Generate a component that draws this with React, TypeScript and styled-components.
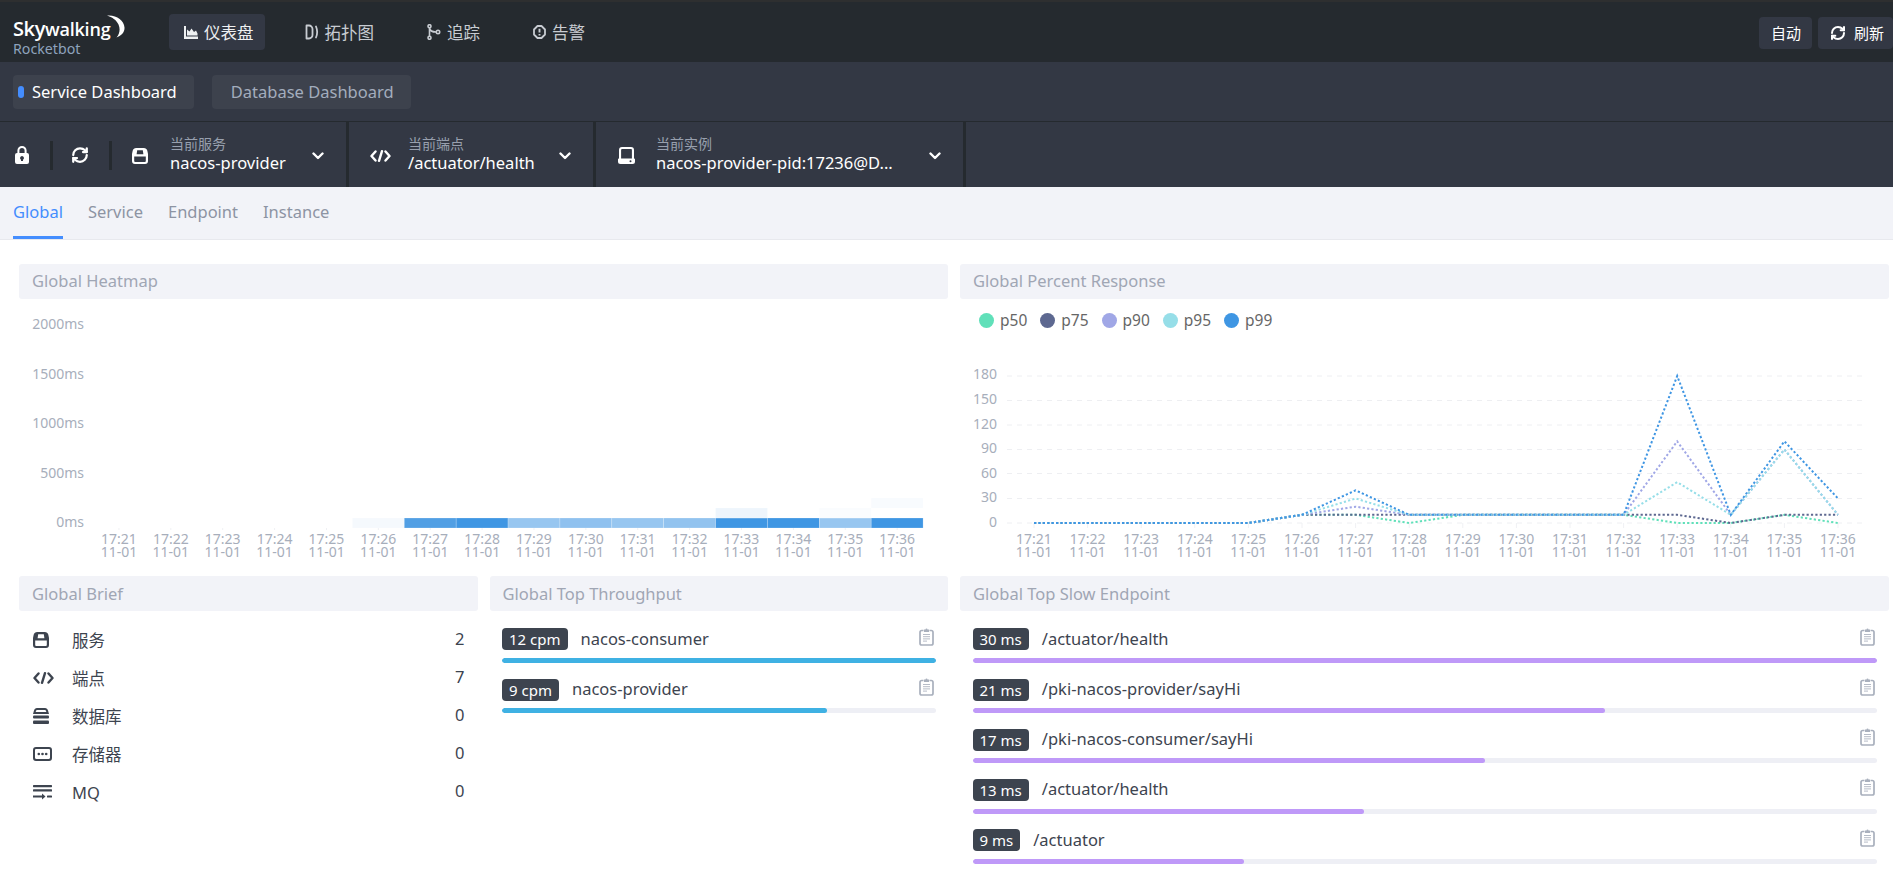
import React from "react";
import styled, { createGlobalStyle } from "styled-components";
import { RefreshCw } from "lucide-react";

const Global = createGlobalStyle`
  html, body { margin: 0; padding: 0; height: 875px; overflow: hidden; background: #fff; }
  body { font-family: "Noto Sans", "Noto Sans CJK SC", sans-serif; }
  * { box-sizing: border-box; }
`;

const Page = styled.div`
  width: 1893px;
  height: 875px;
  overflow: hidden;
  display: flex;
  flex-direction: column;
`;

const TopBar = styled.header`
  height: 62px;
  flex: none;
  background: #252a2f;
  border-top: 2px solid #2e2f30;
  display: flex;
  align-items: center;
  padding-left: 13px;
`;
const Logo = styled.div`
  position: relative;
  width: 156px;
  height: 40px;
  padding-top: 5px;
  color: #fff;
  flex: none;
`;
const LogoName = styled.div`
  font-family: "Open Sans", sans-serif;
  font-size: 18px;
  font-weight: 600;
  line-height: 24px;
  letter-spacing: -0.2px;
  white-space: nowrap;
`;
const LogoBig = styled.span`
  font-size: 20px;
  letter-spacing: -0.4px;
`;
const LogoSub = styled.div`
  font-size: 14.2px;
  line-height: 16px;
  color: #8ea3bd;
`;
const Crescent = styled.svg`
  position: absolute;
  left: 94px;
  top: 3px;
`;
const Nav = styled.nav`
  display: flex;
  align-items: center;
  gap: 25px;
`;
const NavItem = styled.div<{ $active?: boolean }>`
  height: 36px;
  padding: 0 ${(p) => (p.$active ? 11 : 13)}px 0 15px;
  border-radius: 4px;
  display: flex;
  align-items: center;
  gap: 6px;
  font-size: 16.5px;
  color: ${(p) => (p.$active ? "#eef0f2" : "#c8ccd2")};
  background: ${(p) => (p.$active ? "#333844" : "transparent")};
  svg { flex: none; }
`;
const TopActions = styled.div`
  margin-left: auto;
  display: flex;
  gap: 6px;
  margin-top: 1px;
`;
const TopButton = styled.div<{ $pr: number }>`
  height: 32px;
  padding: 0 ${(p) => p.$pr}px 0 12px;
  border-radius: 4px;
  background: #333844;
  color: #fff;
  font-size: 15px;
  display: flex;
  align-items: center;
  gap: 8px;
`;

const DashBar = styled.div`
  height: 59px;
  flex: none;
  background: #333844;
  display: flex;
  align-items: center;
  padding-left: 13px;
  gap: 18px;
`;
const DashTab = styled.div<{ $active?: boolean }>`
  height: 34px;
  border-radius: 4px;
  background: #3d424d;
  display: flex;
  align-items: center;
  padding: ${(p) => (p.$active ? "0 17px 0 5px" : "0 17px 0 19px")};
  gap: 8px;
  font-size: 16.5px;
  color: ${(p) => (p.$active ? "#fff" : "#a3adbd")};
`;
const DashDot = styled.span`
  width: 6px;
  height: 12px;
  border-radius: 3px;
  background: #448dfe;
`;

const ToolBar = styled.div`
  height: 66px;
  flex: none;
  background: #333844;
  border-top: 1px solid #252a2f;
  display: flex;
  align-items: stretch;
`;
const ToolButton = styled.div<{ $w: number; $pr?: number }>`
  width: ${(p) => p.$w}px;
  padding-right: ${(p) => p.$pr ?? 0}px;
  display: flex;
  align-items: center;
  justify-content: center;
  color: #fff;
`;
const ToolSep = styled.div`
  width: 3px;
  height: 29px;
  align-self: center;
  background: #252a2f;
  margin-top: 2px;
  flex: none;
`;
const Selector = styled.div<{ $w: number; $inset: number }>`
  width: ${(p) => p.$w}px;
  flex: none;
  display: flex;
  align-items: center;
  padding: 0 22px 0 ${(p) => p.$inset}px;
  border-right: 3px solid #252a2f;
  color: #fff;
`;
const SelectorIcon = styled.div`
  width: 39px;
  flex: none;
  display: flex;
  align-items: center;
  padding-left: 1px;
  margin-top: 2px;
`;
const SelectorText = styled.div`
  display: flex;
  flex-direction: column;
  margin-top: -2px;
`;
const SelectorLabel = styled.span`
  font-size: 14px;
  line-height: 19px;
  color: #98a0ae;
`;
const SelectorValue = styled.span`
  font-size: 16.5px;
  line-height: 20px;
  color: #fff;
  white-space: nowrap;
`;
const Chevron = styled.svg`
  margin-left: auto;
  margin-top: 2px;
  flex: none;
`;

const Tabs = styled.div`
  height: 53px;
  flex: none;
  background: #f2f3f8;
  border-bottom: 1px solid #e8e9ee;
  display: flex;
  padding-left: 13px;
  gap: 25px;
`;
const Tab = styled.div<{ $active?: boolean }>`
  height: 52px;
  line-height: 50px;
  font-size: 16.5px;
  color: ${(p) => (p.$active ? "#448dfe" : "#8d94a3")};
  border-bottom: 3px solid ${(p) => (p.$active ? "#448dfe" : "transparent")};
`;

const Grid = styled.main`
  padding: 24px 4px 0 19px;
  display: grid;
  grid-template-columns: repeat(4, 1fr);
  grid-template-rows: 312px auto;
  column-gap: 12px;
`;
const Panel = styled.section<{ $span?: number }>`
  grid-column: span ${(p) => p.$span ?? 1};
  min-width: 0;
`;
const PanelTitle = styled.div<{ $lh?: number }>`
  height: 35px;
  background: #f2f3f8;
  border-radius: 3px;
  padding-left: 13px;
  font-size: 16.5px;
  line-height: ${(p) => p.$lh ?? 35}px;
  color: #a0a6b4;
`;

const ChartSvg = styled.svg`
  display: block;
`;
const AxisText = styled.text`
  font-size: 14px;
  fill: #a7aebb;
`;
const Legend = styled.div`
  height: 42px;
  display: flex;
  align-items: center;
  padding-left: 19px;
  gap: 13px;
`;
const LegendItem = styled.div`
  display: flex;
  align-items: center;
  gap: 6px;
  font-size: 15.5px;
  color: #666;
`;
const LegendDot = styled.span<{ $c: string }>`
  width: 15px;
  height: 15px;
  border-radius: 50%;
  background: ${(p) => p.$c};
`;

const BriefList = styled.div`
  padding: 10px 13px 0;
`;
const BriefRow = styled.div`
  height: 38px;
  display: flex;
  align-items: center;
  color: #3d444f;
  font-size: 16.5px;
`;
const BriefIcon = styled.div`
  width: 40px;
  flex: none;
  display: flex;
  align-items: center;
  padding-left: 1px;
`;
const BriefValue = styled.span`
  margin-left: auto;
  padding-bottom: 4px;
`;

const RankList = styled.div`
  padding: 17.4px 12.5px 0;
  display: flex;
  flex-direction: column;
  gap: 15.6px;
`;
const RankItem = styled.div``;
const RankHead = styled.div`
  height: 22px;
  display: flex;
  align-items: center;
  gap: 13px;
`;
const Badge = styled.span`
  height: 22px;
  line-height: 22px;
  padding: 0 7px;
  border-radius: 4px;
  background: #3d444f;
  color: #fff;
  font-size: 15px;
  white-space: nowrap;
`;
const RankName = styled.span`
  font-size: 16.5px;
  color: #3d444f;
  line-height: 22px;
  margin-top: -1px;
`;
const Clip = styled.svg`
  margin-left: auto;
  margin-right: 2px;
  margin-top: -5px;
  color: #a9b0bd;
`;
const Track = styled.div`
  height: 5px;
  margin-top: 7.6px;
  border-radius: 3px;
  background: #eeeff5;
  overflow: hidden;
`;
const Fill = styled.div<{ $c: string }>`
  height: 100%;
  border-radius: 3px;
  background: ${(p) => p.$c};
`;

/* ---------- icons ---------- */
const ServiceIcon = ({ s = 16 }: { s?: number }) => (
  <svg width={s} height={s} viewBox="0 0 16 16" fill="currentColor">
    <path
      fillRule="evenodd"
      d="M4.500 0h7A4 4 0 0 1 15.500 3.500L16 6v7a3 3 0 0 1-3 3H3a3 3 0 0 1-3-3V6l.5-2.500A4 4 0 0 1 4.500 0zM2.200 8.400V13c0 .6.3.9.9.9h9.800c.6 0 .9-.3.9-.9V8.400zM5.200 2.200 4.600 6.200h6.800l-.6-4z"
    />
  </svg>
);
const CodeIcon = ({ w = 21, h = 12 }: { w?: number; h?: number }) => (
  <svg width={w} height={h} viewBox="0 0 21 12" fill="none" stroke="currentColor" strokeWidth="2.400" strokeLinecap="round" strokeLinejoin="round">
    <path d="M5.500 1.500 1.500 6l4 4.500M15.500 1.500l4 4.500-4 4.500M12 1.200 9 10.800" />
  </svg>
);
const InstanceIcon = () => (
  <svg width="17" height="17" viewBox="0 0 17 17" fill="currentColor">
    <path
      fillRule="evenodd"
      d="M4 0h9a3 3 0 0 1 3 3v8.500h.2c.5 0 .8.4.8.8v2.200A2.500 2.500 0 0 1 14.500 17h-12A2.500 2.500 0 0 1 0 14.500v-2.200c0-.4.3-.8.8-.8H1V3a3 3 0 0 1 3-3zM3.100 3v8.500h10.800V3c0-.6-.4-1-1-1H4c-.5 0-.9.4-.9 1zM12.500 13.200a1 1 0 1 0 0 2 1 1 0 0 0 0-2z"
    />
  </svg>
);
const LockIcon = () => (
  <svg width="14" height="18" viewBox="0 0 14 18" fill="currentColor">
    <path
      fillRule="evenodd"
      d="M7 0a4.600 4.600 0 0 1 4.600 4.600V7H12a2 2 0 0 1 2 2v7a2 2 0 0 1-2 2H2a2 2 0 0 1-2-2V9a2 2 0 0 1 2-2h.4V4.600A4.600 4.600 0 0 1 7 0zm0 2a2.600 2.600 0 0 0-2.600 2.600V7h5.200V4.600A2.600 2.600 0 0 0 7 2zm0 8a2 2 0 0 0-1 3.700V15h2v-1.300A2 2 0 0 0 7 10z"
    />
  </svg>
);
const ChevronIcon = () => (
  <Chevron width="12" height="8" viewBox="0 0 12 8" fill="none" stroke="currentColor" strokeWidth="2.400" strokeLinecap="round" strokeLinejoin="round">
    <path d="M1.500 1.500 6 6l4.500-4.500" />
  </Chevron>
);
const ChartIcon = () => (
  <svg width="14" height="14" viewBox="0 0 14 14" fill="currentColor">
    <path d="M0 1h2v10.500h12V14H0z" />
    <path d="M3 10.500V4.500l2.500 2 2-3 2.500 3.500 2-1.500 1.500 3v2z" />
  </svg>
);
const TopoIcon = () => (
  <svg width="14" height="16" viewBox="0 0 14 16" fill="none" stroke="currentColor" strokeWidth="1.800">
    <path d="M1.500 1.500h2.500A3.500 3.500 0 0 1 7.500 5v6a3.500 3.500 0 0 1-3.500 3.500H1.500z" strokeLinejoin="round" />
    <path d="M11 2.500c1.500 3.500 1.500 7.500 0 11" strokeLinecap="round" />
  </svg>
);
const TraceIcon = () => (
  <svg width="14" height="16" viewBox="0 0 14 16" fill="none" stroke="currentColor" strokeWidth="1.600">
    <path d="M2.500 3v10M2.500 4c.5 3 3 4 6.500 4" />
    <circle cx="2.500" cy="2.200" r="1.500" />
    <circle cx="2.500" cy="13.800" r="1.500" />
    <circle cx="11" cy="8" r="1.700" />
  </svg>
);
const AlertIcon = () => (
  <svg width="13" height="14" viewBox="0 0 13 14" fill="none" stroke="currentColor" strokeWidth="1.800">
    <path d="M4.500 1h4L12 4.500v5L8.500 13h-4L1 9.500v-5z" strokeLinejoin="round" />
    <path d="M6.500 3.800v3.800M6.500 9v1.400" strokeWidth="1.900" />
  </svg>
);
const DbIcon = () => (
  <svg width="16" height="16" viewBox="0 0 16 16" fill="currentColor">
    <path fillRule="evenodd" d="M4 0h8c1.500 0 2.600 1.200 3 2.600L16 6H0l1-3.400C1.400 1.200 2.500 0 4 0zm.2 2c-.6 0-1 .3-1.200.8L2.700 4h10.600L13 2.800c-.2-.5-.6-.8-1.200-.8z" />
    <rect y="7.500" width="16" height="3" rx="1" />
    <rect y="12.500" width="16" height="3.500" rx="1" />
  </svg>
);
const StorageIcon = () => (
  <svg width="19" height="14" viewBox="0 0 19 14" fill="currentColor">
    <path fillRule="evenodd" d="M3 0h13a3 3 0 0 1 3 3v8a3 3 0 0 1-3 3H3a3 3 0 0 1-3-3V3a3 3 0 0 1 3-3zm.2 2C2.500 2 2 2.500 2 3.200v7.600c0 .7.500 1.200 1.200 1.200h12.600c.7 0 1.200-.5 1.200-1.200V3.200c0-.7-.5-1.200-1.200-1.200z" />
    <circle cx="5.800" cy="7" r="1.300" />
    <circle cx="9.500" cy="7" r="1.300" />
    <circle cx="13.200" cy="7" r="1.300" />
  </svg>
);
const MqIcon = () => (
  <svg width="19" height="15" viewBox="0 0 19 15" fill="currentColor">
    <rect width="19" height="2.200" rx=".6" />
    <rect y="4.300" width="19" height="2.200" rx=".6" />
    <rect y="10.500" width="10" height="2" />
    <path d="M9 8.400l3.500 3.100L9 14.600z" />
    <rect x="14" y="10.400" width="5" height="2.200" rx=".6" />
  </svg>
);
const ClipIcon = () => (
  <Clip width="15" height="18" viewBox="0 0 15 18" fill="none" stroke="currentColor">
    <path strokeWidth="1.700" d="M4.500 2.500H2.800C1.800 2.500 1 3.300 1 4.300v10.900c0 1 .8 1.800 1.800 1.800h9.400c1 0 1.800-.8 1.800-1.800V4.300c0-1-.8-1.800-1.800-1.800h-1.700" />
    <path fill="currentColor" strokeWidth="0" d="M5 1.500h1.500a1 1 0 0 1 2 0H10v2.500H5z" />
    <path strokeWidth="1" opacity=".85" d="M4 6.500h7M4 8.700h7M4 10.900h7M4 13.100h4" />
  </Clip>
);
const CrescentIcon = () => (
  <Crescent width="18" height="23" viewBox="0 0 18 23" fill="#fff">
    <path d="M0 .5C9-.5 17 5 17.500 12.500 17.800 17.500 14 21 9.500 22.500 12.700 18.500 13.500 14 11.500 9.500 9.500 5 5 2 0 .5z" />
  </Crescent>
);

/* ---------- chart data ---------- */
const times = ["17:21","17:22","17:23","17:24","17:25","17:26","17:27","17:28","17:29","17:30","17:31","17:32","17:33","17:34","17:35","17:36"];

const heatCells: [number, number, string][] = [
  [5, 0, "#f5f9fd"], [6, 0, "#519fe4"], [7, 0, "#3f96e3"], [8, 0, "#97c6f0"], [9, 0, "#8fc1ef"],
  [10, 0, "#97c6f0"], [11, 0, "#92c3ef"], [12, 0, "#3f96e3"], [12, 1, "#eef5fc"], [13, 0, "#3f96e3"],
  [14, 0, "#97c6f0"], [14, 1, "#fafcfe"], [15, 0, "#3f96e3"], [15, 2, "#f8fbfe"],
];
const heatY: [string, number][] = [["2000ms", 25], ["1500ms", 75], ["1000ms", 124], ["500ms", 174], ["0ms", 223]];

const HeatChart = () => {
  const left = 74;
  const cw = 51.88;
  return (
    <ChartSvg width="929" height="277" viewBox="0 0 929 277">
      {heatY.map(([t, y]) => (
        <AxisText key={t} x={65} y={y + 5} textAnchor="end">{t}</AxisText>
      ))}
      {heatCells.map(([c, r, col]) => (
        <rect key={`${c}-${r}`} x={left + c * cw} y={219 - r * 10} width={cw} height={10} fill={col} stroke="#fff" strokeOpacity=".35" strokeWidth=".6" />
      ))}
      {times.map((t, i) => (
        <g key={t}>
          <line x1={left + cw * (i + 0.5)} x2={left + cw * (i + 0.5)} y1={229} y2={231} stroke="#f0f1f4" />
          <AxisText x={left + cw * (i + 0.5)} y={245} textAnchor="middle">{t}</AxisText>
          <AxisText x={left + cw * (i + 0.5)} y={258} textAnchor="middle">11-01</AxisText>
        </g>
      ))}
    </ChartSvg>
  );
};

const series: { c: string; d: number[] }[] = [
  { c: "#60e0b9", d: [0,0,0,0,0,10,10,0,10,10,10,10,0,0,10,0] },
  { c: "#5d6890", d: [0,0,0,0,0,10,10,10,10,10,10,10,10,0,10,10] },
  { c: "#a0a7e6", d: [0,0,0,0,0,10,20,10,10,10,10,10,100,10,90,10] },
  { c: "#96dee8", d: [0,0,0,0,0,10,30,10,10,10,10,10,50,10,90,10] },
  { c: "#3f96e3", d: [0,0,0,0,0,10,40,10,10,10,10,10,180,10,100,30] },
];
const legend = [
  ["p50", "#60e0b9"], ["p75", "#5d6890"], ["p90", "#a0a7e6"], ["p95", "#96dee8"], ["p99", "#3f96e3"],
];
const lineYLabels: [string, number, number][] = [
  ["180", 374, 376], ["150", 399, 400.5], ["120", 424, 425], ["90", 448, 449.5], ["60", 473, 473.5], ["30", 497, 498.5], ["0", 522, 523],
];

const LineChart = () => {
  const ox = 960;
  const oy = 341;
  const px = (i: number) => 1034 - ox + i * 53.6;
  const py = (v: number) => 523 - oy - (v * 147) / 180;
  return (
    <ChartSvg width="929" height="235" viewBox="0 0 929 235">
      {lineYLabels.map(([t, ly, gy]) => (
        <g key={t}>
          <AxisText x={37} y={ly - oy + 5} textAnchor="end">{t}</AxisText>
          <line x1={47} x2={903} y1={gy - oy} y2={gy - oy} stroke="#eeeff2" strokeDasharray="5 5" />
        </g>
      ))}
      {times.map((t, i) => (
        <g key={t}>
          <line x1={px(i)} x2={px(i)} y1={py(0)} y2={py(0) + 5} stroke="#f0f1f4" />
          <AxisText x={px(i)} y={203} textAnchor="middle">{t}</AxisText>
          <AxisText x={px(i)} y={216} textAnchor="middle">11-01</AxisText>
        </g>
      ))}
      {series.map((s) => (
        <polyline
          key={s.c}
          points={s.d.map((v, i) => `${px(i)},${py(v)}`).join(" ")}
          fill="none"
          stroke={s.c}
          strokeWidth="2"
          strokeDasharray="2.200 2.200"
        />
      ))}
    </ChartSvg>
  );
};

const briefRows: [React.ReactNode, string, number][] = [
  [<ServiceIcon key="s" />, "服务", 2],
  [<CodeIcon key="c" />, "端点", 7],
  [<DbIcon key="d" />, "数据库", 0],
  [<StorageIcon key="st" />, "存储器", 0],
  [<MqIcon key="m" />, "MQ", 0],
];
const throughput = [
  { v: "12 cpm", n: "nacos-consumer", p: 100 },
  { v: "9 cpm", n: "nacos-provider", p: 75 },
];
const slow = [
  { v: "30 ms", n: "/actuator/health", p: 100 },
  { v: "21 ms", n: "/pki-nacos-provider/sayHi", p: 70 },
  { v: "17 ms", n: "/pki-nacos-consumer/sayHi", p: 56.7 },
  { v: "13 ms", n: "/actuator/health", p: 43.3 },
  { v: "9 ms", n: "/actuator", p: 30 },
];

const Rank = ({ rows, color }: { rows: { v: string; n: string; p: number }[]; color: string }) => (
  <RankList>
    {rows.map((r) => (
      <RankItem key={r.v + r.n}>
        <RankHead>
          <Badge>{r.v}</Badge>
          <RankName>{r.n}</RankName>
          <ClipIcon />
        </RankHead>
        <Track>
          <Fill $c={color} style={{ width: `${r.p}%` }} />
        </Track>
      </RankItem>
    ))}
  </RankList>
);

export default function App() {
  return (
    <Page>
      <Global />
      <TopBar>
        <Logo>
          <LogoName><LogoBig>Sky</LogoBig>walking</LogoName>
          <LogoSub>Rocketbot</LogoSub>
          <CrescentIcon />
        </Logo>
        <Nav>
          <NavItem $active><ChartIcon />仪表盘</NavItem>
          <NavItem><TopoIcon />拓扑图</NavItem>
          <NavItem><TraceIcon />追踪</NavItem>
          <NavItem><AlertIcon />告警</NavItem>
        </Nav>
        <TopActions>
          <TopButton $pr={11}>自动</TopButton>
          <TopButton $pr={9}><RefreshCw size={16} strokeWidth={3} />刷新</TopButton>
        </TopActions>
      </TopBar>

      <DashBar>
        <DashTab $active><DashDot />Service Dashboard</DashTab>
        <DashTab>Database Dashboard</DashTab>
      </DashBar>

      <ToolBar>
        <ToolButton $w={50} $pr={7}><LockIcon /></ToolButton>
        <ToolSep />
        <ToolButton $w={56} $pr={3}><RefreshCw size={18} strokeWidth={3} /></ToolButton>
        <ToolSep />
        <Selector $w={237} $inset={19}>
          <SelectorIcon><ServiceIcon /></SelectorIcon>
          <SelectorText>
            <SelectorLabel>当前服务</SelectorLabel>
            <SelectorValue>nacos-provider</SelectorValue>
          </SelectorText>
          <ChevronIcon />
        </Selector>
        <Selector $w={247} $inset={20}>
          <SelectorIcon><CodeIcon /></SelectorIcon>
          <SelectorText>
            <SelectorLabel>当前端点</SelectorLabel>
            <SelectorValue>/actuator/health</SelectorValue>
          </SelectorText>
          <ChevronIcon />
        </Selector>
        <Selector $w={370} $inset={21}>
          <SelectorIcon><InstanceIcon /></SelectorIcon>
          <SelectorText>
            <SelectorLabel>当前实例</SelectorLabel>
            <SelectorValue>nacos-provider-pid:17236@D...</SelectorValue>
          </SelectorText>
          <ChevronIcon />
        </Selector>
      </ToolBar>

      <Tabs>
        <Tab $active>Global</Tab>
        <Tab>Service</Tab>
        <Tab>Endpoint</Tab>
        <Tab>Instance</Tab>
      </Tabs>

      <Grid>
        <Panel $span={2}>
          <PanelTitle $lh={34}>Global Heatmap</PanelTitle>
          <HeatChart />
        </Panel>
        <Panel $span={2}>
          <PanelTitle $lh={34}>Global Percent Response</PanelTitle>
          <Legend>
            {legend.map(([t, c]) => (
              <LegendItem key={t}>
                <LegendDot $c={c} />
                {t}
              </LegendItem>
            ))}
          </Legend>
          <LineChart />
        </Panel>
        <Panel>
          <PanelTitle>Global Brief</PanelTitle>
          <BriefList>
            {briefRows.map(([icon, label, value]) => (
              <BriefRow key={label}>
                <BriefIcon>{icon}</BriefIcon>
                {label}
                <BriefValue>{value}</BriefValue>
              </BriefRow>
            ))}
          </BriefList>
        </Panel>
        <Panel>
          <PanelTitle>Global Top Throughput</PanelTitle>
          <Rank rows={throughput} color="#3fb1e3" />
        </Panel>
        <Panel $span={2}>
          <PanelTitle>Global Top Slow Endpoint</PanelTitle>
          <Rank rows={slow} color="#bf99f8" />
        </Panel>
      </Grid>
    </Page>
  );
}
